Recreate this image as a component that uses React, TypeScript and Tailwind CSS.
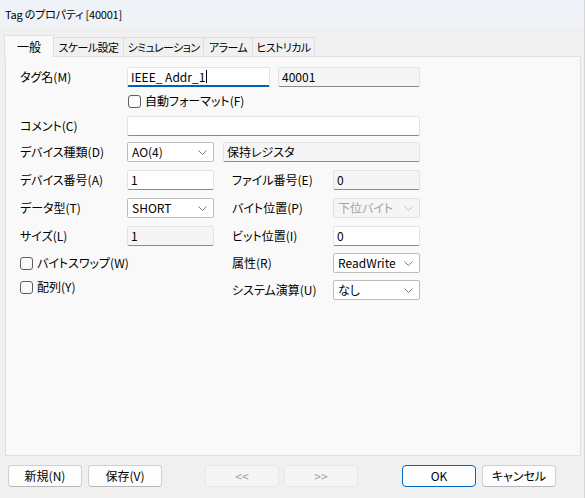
import React from "react";

const FONT = "font-['Segoe_UI','Noto_Sans_CJK_JP','Noto_Sans',sans-serif] [font-feature-settings:'palt']";

function Chevron({ light }: { light?: boolean }) {
  return (
    <svg width="9" height="5" viewBox="0 0 9 5" className="shrink-0">
      <polyline points="0.5,0.5 4.5,4.5 8.5,0.5" fill="none" stroke={light ? "#c4c4c4" : "#7a7a7a"} strokeWidth="1" />
    </svg>
  );
}

function TextBox({ w, value, readOnly, focused, caret }: { w: string; value?: string; readOnly?: boolean; focused?: boolean; caret?: boolean }) {
  const base = "h-[20px] flex items-center px-[3px] text-[12px] text-black rounded-[2px] border border-[#e3e3e3] ";
  const bg = readOnly ? "bg-[#f5f5f5] " : "bg-white ";
  const bottom = focused ? "border-b-2 border-b-[#005fb8]" : "border-b-[#8a8a8a]";
  return (
    <div className={base + bg + bottom + " " + w}>
      <span className="leading-none whitespace-pre">{value}</span>
      {caret && <span className="inline-block w-px h-[13px] bg-black ml-[1px]" />}
    </div>
  );
}

function Select({ w, value, disabled }: { w: string; value: string; disabled?: boolean }) {
  const cls = disabled
    ? "bg-[#f5f5f5] border-[#e0e0e0] text-[#a3a3a3]"
    : "bg-white border-[#bdbdbd] text-black";
  return (
    <div className={"h-[20px] flex items-center justify-between pl-[4px] pr-[6px] text-[12px] rounded-[2px] border " + cls + " " + w}>
      <span className="leading-none whitespace-pre">{value}</span>
      <Chevron light={disabled} />
    </div>
  );
}

function CheckBox({ label }: { label: string }) {
  return (
    <div className="flex items-center gap-[4px] text-[12px] text-black">
      <span className="w-[13px] h-[13px] rounded-[3px] border border-[#5e5e5e] bg-[#fbfbfb]" />
      <span className="leading-none">{label}</span>
    </div>
  );
}

function Label({ children, w }: { children: React.ReactNode; w: string }) {
  return <div className={"text-[12px] text-black leading-none shrink-0 whitespace-nowrap " + w}>{children}</div>;
}

function Btn({ children, disabled, primary, cls }: { children: React.ReactNode; disabled?: boolean; primary?: boolean; cls?: string }) {
  let s = "h-[22px] w-[74px] flex items-center justify-center text-[12px] rounded-[4px] border ";
  if (disabled) s += "bg-[#f5f5f5] border-[#e8e8e8] text-[#9e9e9e]";
  else if (primary) s += "bg-[#fdfdfd] border-[#0067c0] text-black";
  else s += "bg-[#fdfdfd] border-[#d0d0d0] border-b-[#b8b8b8] text-black";
  return <div className={s + " " + (cls ?? "")}>{children}</div>;
}

function Tab({ label, w, active }: { label: string; w: string; active?: boolean }) {
  if (active) {
    return (
      <div className={"h-[22px] -mb-px z-10 flex items-center justify-center whitespace-nowrap text-[12px] text-black bg-[#f9f9f9] border border-b-0 border-[#e0e0e0] " + w}>
        {label}
      </div>
    );
  }
  return (
    <div className={"h-[19px] flex items-center justify-center whitespace-nowrap text-[11px] tracking-[-0.6px] text-black bg-[#f0f0f0] border border-l-0 border-b-0 border-[#dedede] " + w}>
      {label}
    </div>
  );
}

export default function App() {
  return (
    <div className={"w-[585px] h-[498px] bg-[#f0f0f0] flex flex-col overflow-hidden border-r border-[#d6d6d6] " + FONT}>
      {/* title bar */}
      <div className="h-[28px] shrink-0 bg-[#eff3f8] flex items-center pl-[5px] text-[11px] tracking-[-0.2px] text-black whitespace-nowrap">
        Tag のプロパティ [40001]
      </div>

      {/* tabs */}
      <div className="pt-[7px] pl-[4px] flex items-end">
        <Tab label="一般" w="w-[50px]" active />
        <Tab label="スケール設定" w="w-[70px]" />
        <Tab label="シミュレーション" w="w-[80px]" />
        <Tab label="アラーム" w="w-[49px]" />
        <Tab label="ヒストリカル" w="w-[62px]" />
      </div>

      {/* panel */}
      <div className="ml-[5px] mr-[3px] h-[400px] shrink-0 bg-[#f9f9f9] border border-[#e0e0e0] pl-[14px] pt-[10px]">
        {/* row 1 */}
        <div className="h-[20px] flex items-center">
          <Label w="w-[107px]">タグ名(M)</Label>
          <TextBox w="w-[143px]" value="IEEE_ Addr_1" focused caret />
          <div className="w-[8px]" />
          <TextBox w="w-[142px]" value="40001" readOnly />
        </div>
        {/* row 2 */}
        <div className="h-[20px] mt-[4px] flex items-center pl-[108px]">
          <CheckBox label="自動フォーマット(F)" />
        </div>
        {/* row 3 */}
        <div className="h-[20px] mt-[5px] flex items-center">
          <Label w="w-[107px]">コメント(C)</Label>
          <TextBox w="w-[293px]" value="" />
        </div>
        {/* row 4 */}
        <div className="h-[20px] mt-[6px] flex items-center">
          <Label w="w-[107px]">デバイス種類(D)</Label>
          <Select w="w-[87px]" value="AO(4)" />
          <div className="w-[9px]" />
          <TextBox w="w-[197px]" value="保持レジスタ" readOnly />
        </div>
        {/* row 5 */}
        <div className="h-[20px] mt-[8px] flex items-center">
          <Label w="w-[107px]">デバイス番号(A)</Label>
          <TextBox w="w-[87px]" value="1" />
          <div className="w-[18px]" />
          <Label w="w-[101px]">ファイル番号(E)</Label>
          <TextBox w="w-[87px]" value="0" readOnly />
        </div>
        {/* row 6 */}
        <div className="h-[20px] mt-[8px] flex items-center">
          <Label w="w-[107px]">データ型(T)</Label>
          <Select w="w-[87px]" value="SHORT" />
          <div className="w-[18px]" />
          <Label w="w-[101px]">バイト位置(P)</Label>
          <Select w="w-[87px]" value="下位バイト" disabled />
        </div>
        {/* row 7 */}
        <div className="h-[20px] mt-[8px] flex items-center">
          <Label w="w-[107px]">サイズ(L)</Label>
          <TextBox w="w-[87px]" value="1" readOnly />
          <div className="w-[18px]" />
          <Label w="w-[101px]">ビット位置(I)</Label>
          <TextBox w="w-[87px]" value="0" />
        </div>
        {/* row 8 */}
        <div className="h-[20px] mt-[7px] flex items-center">
          <div className="w-[212px] shrink-0">
            <CheckBox label="バイトスワップ(W)" />
          </div>
          <Label w="w-[101px]">属性(R)</Label>
          <Select w="w-[87px]" value="ReadWrite" />
        </div>
        {/* row 9 */}
        <div className="h-[20px] mt-[7px] flex items-center">
          <div className="w-[212px] shrink-0 -mt-[6px]">
            <CheckBox label="配列(Y)" />
          </div>
          <Label w="w-[101px]">システム演算(U)</Label>
          <Select w="w-[87px]" value="なし" />
        </div>
      </div>

      {/* buttons */}
      <div className="mt-[9px] pl-[8px] flex items-center">
        <Btn>新規(N)</Btn>
        <Btn cls="ml-[6px]">保存(V)</Btn>
        <Btn disabled cls="ml-[43px]">&lt;&lt;</Btn>
        <Btn disabled cls="ml-[5px]">&gt;&gt;</Btn>
        <Btn primary cls="ml-[44px]">OK</Btn>
        <Btn cls="ml-[6px]">キャンセル</Btn>
      </div>
    </div>
  );
}
